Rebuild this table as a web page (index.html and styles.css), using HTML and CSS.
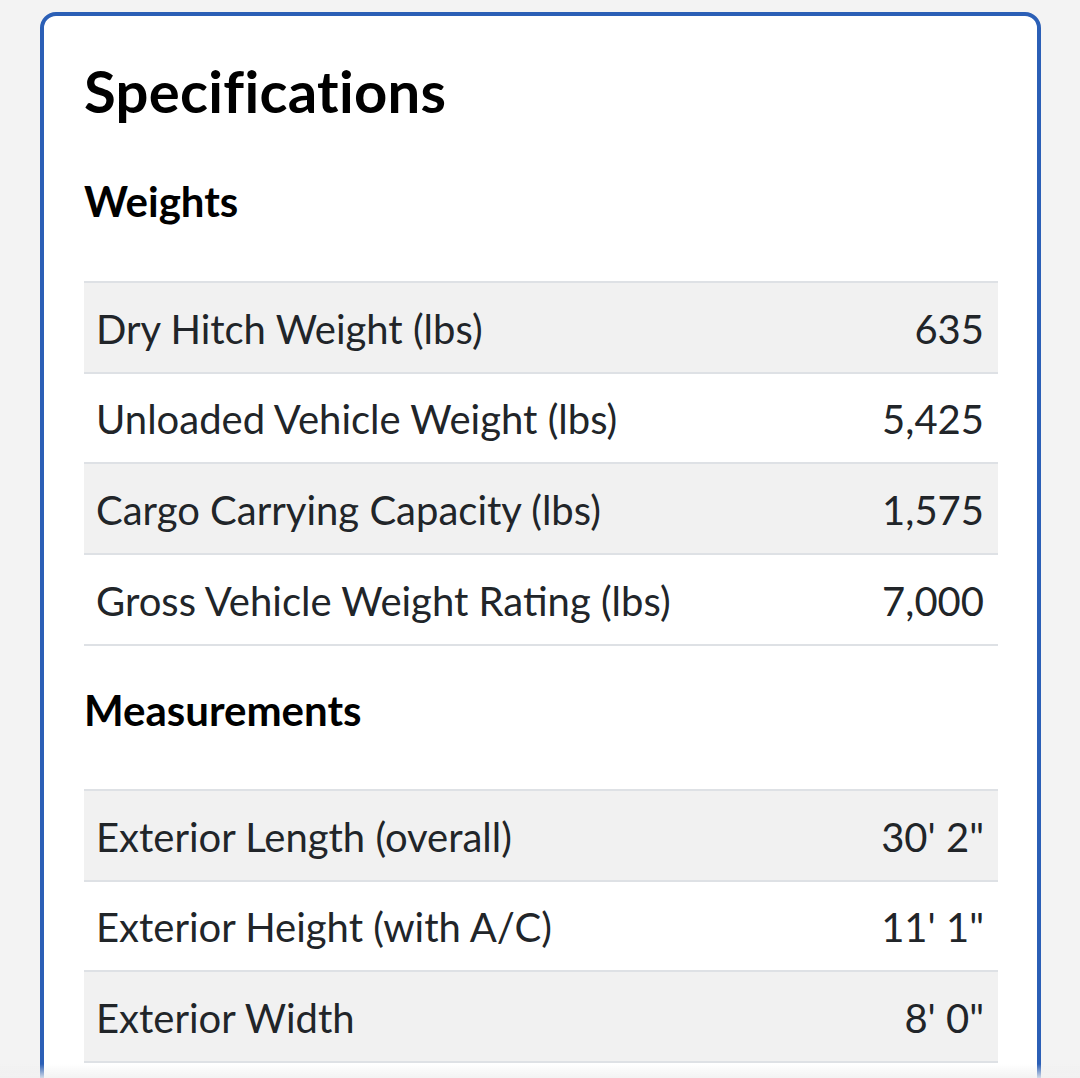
FILE: index.html
```html
<!DOCTYPE html>
<html lang="en">
<head>
<meta charset="utf-8">
<title>Specifications</title>
<link rel="stylesheet" href="styles.css">
</head>
<body>
<main class="page">
  <section class="card">
    <h1 class="title">Specifications</h1>

    <h2 class="group-title">Weights</h2>
    <div class="spec-table">
      <div class="row"><span class="label">Dry Hitch Weight (lbs)</span><span class="value">635</span></div>
      <div class="row"><span class="label">Unloaded Vehicle Weight (lbs)</span><span class="value">5,425</span></div>
      <div class="row"><span class="label">Cargo Carrying Capacity (lbs)</span><span class="value">1,575</span></div>
      <div class="row"><span class="label">Gross Vehicle Weight Rating (lbs)</span><span class="value">7,000</span></div>
    </div>

    <h2 class="group-title group-title--second">Measurements</h2>
    <div class="spec-table">
      <div class="row"><span class="label">Exterior Length (overall)</span><span class="value">30' 2"</span></div>
      <div class="row"><span class="label">Exterior Height (with A/C)</span><span class="value">11' 1"</span></div>
      <div class="row"><span class="label">Exterior Width</span><span class="value">8' 0"</span></div>
    </div>
  </section>
</main>
<div class="fade"></div>
</body>
</html>
```

FILE: styles.css
```css
html, body {
  margin: 0;
  padding: 0;
  background: #f3f3f3;
}

.page {
  padding: 12px 39px 0 40px;
}

.card {
  background: #ffffff;
  border: 4px solid #2b5fb6;
  border-radius: 16px;
  padding: 40px 39px 40px 40px;
}

.title {
  margin: 0;
  font-family: "Lato", "Noto Sans", sans-serif;
  font-weight: 700;
  font-size: 58px;
  line-height: 1.2;
  color: #000;
  letter-spacing: 0.3px;
}

.group-title {
  margin: 50px 0 55px;
  font-family: "Lato", "Noto Sans", sans-serif;
  font-weight: 700;
  font-size: 42px;
  line-height: 1.2;
  color: #000;
}

.group-title--second {
  margin-top: 39px;
  margin-bottom: 54px;
}

.spec-table {
  border-bottom: 2px solid #dee1e5;
}

.row {
  display: flex;
  justify-content: space-between;
  align-items: center;
  box-sizing: border-box;
  height: 90.67px;
  border-top: 2px solid #dee1e5;
  padding: 3px 14px 0 12px;
  font-family: "Lato", "Noto Sans", sans-serif;
  font-size: 40px;
  line-height: 1.2;
  color: #212529;
}

.row:nth-child(odd) {
  background: #f1f1f1;
}

.fade {
  position: fixed;
  left: 0;
  right: 0;
  bottom: 0;
  height: 14px;
  background: linear-gradient(to bottom, rgba(245,245,245,0), rgba(240,240,240,0.85));
  pointer-events: none;
}
```
